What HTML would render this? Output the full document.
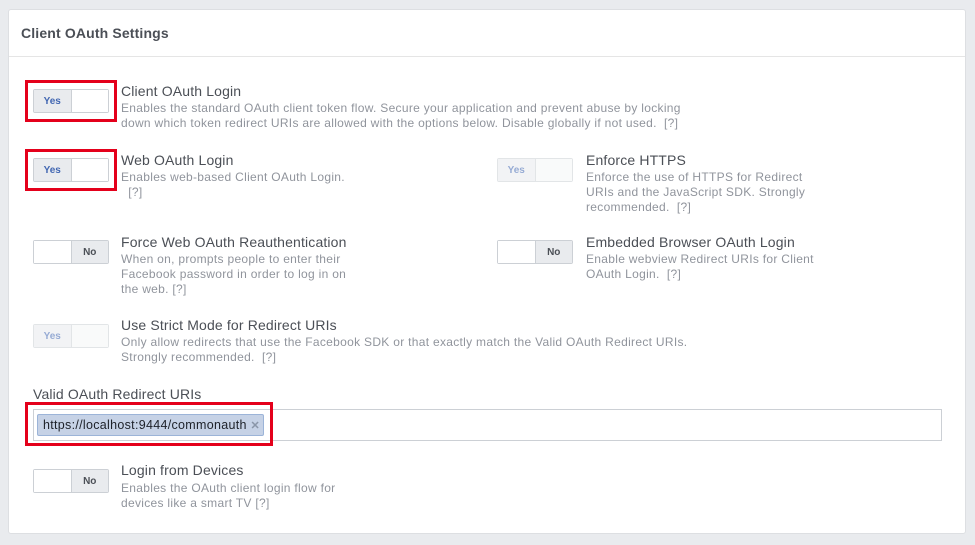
<!DOCTYPE html><html><head><style>
body{margin:0;width:975px;height:545px;background:#e9ebee;font-family:"Liberation Sans",sans-serif;position:relative;overflow:hidden}
.card{position:absolute;left:8px;top:9px;width:958px;height:525px;background:#fff;border:1px solid #dddfe2;border-radius:3px;box-sizing:border-box}
.hd{position:absolute;left:0;top:0;width:100%;height:47px;border-bottom:1px solid #e5e5e5;box-sizing:border-box;font-weight:bold;font-size:14px;color:#4b4f56;padding:15px 12px;letter-spacing:0.15px}
.a{position:absolute}
.tg{position:absolute;width:76px;height:24px;border:1px solid #ccd0d5;border-radius:2px;box-sizing:border-box;display:flex;font-size:10px;font-weight:bold}
.tg span{flex:1;display:flex;align-items:center;justify-content:center}
.on span:first-child{background:#e9ebee;color:#4267b2;border-right:1px solid #ccd0d5}
.on span:last-child{background:#fff}
.off span:first-child{background:#fff;border-right:1px solid #ccd0d5}
.off span:last-child{background:#e9ebee;color:#4b4f56}
.dis{opacity:.55}
.dis span:last-child{background:#f5f6f7}
.t{position:absolute;font-size:14px;color:#4b4f56;line-height:17px;letter-spacing:0.15px;white-space:nowrap}
.d{position:absolute;font-size:12px;color:#90949c;line-height:15px;letter-spacing:0.3px;white-space:nowrap}
.red{position:absolute;border:3px solid #e4001b;box-sizing:border-box}
</style></head><body>
<div class="card"><div class="hd">Client OAuth Settings</div></div>

<div class="tg on" style="left:33px;top:89px"><span>Yes</span><span></span></div>
<div class="red" style="left:25px;top:80px;width:92px;height:42px"></div>
<div class="t" style="left:121px;top:83px">Client OAuth Login</div>
<div class="d" style="left:121px;top:101px">Enables the standard OAuth client token flow. Secure your application and prevent abuse by locking<br>down which token redirect URIs are allowed with the options below. Disable globally if not used. &nbsp;[?]</div>

<div class="tg on" style="left:33px;top:158px"><span>Yes</span><span></span></div>
<div class="red" style="left:25px;top:149px;width:92px;height:42px"></div>
<div class="t" style="left:121px;top:152px">Web OAuth Login</div>
<div class="d" style="left:121px;top:170px">Enables web-based Client OAuth Login.<br>&nbsp; [?]</div>

<div class="tg on dis" style="left:497px;top:158px"><span>Yes</span><span></span></div>
<div class="t" style="left:586px;top:152px">Enforce HTTPS</div>
<div class="d" style="left:586px;top:170px">Enforce the use of HTTPS for Redirect<br>URIs and the JavaScript SDK. Strongly<br>recommended. &nbsp;[?]</div>

<div class="tg off" style="left:33px;top:240px"><span></span><span>No</span></div>
<div class="t" style="left:121px;top:234px">Force Web OAuth Reauthentication</div>
<div class="d" style="left:121px;top:252px">When on, prompts people to enter their<br>Facebook password in order to log in on<br>the web. [?]</div>

<div class="tg off" style="left:497px;top:240px"><span></span><span>No</span></div>
<div class="t" style="left:586px;top:234px">Embedded Browser OAuth Login</div>
<div class="d" style="left:586px;top:252px">Enable webview Redirect URIs for Client<br>OAuth Login. &nbsp;[?]</div>

<div class="tg on dis" style="left:33px;top:324px"><span>Yes</span><span></span></div>
<div class="t" style="left:121px;top:317px">Use Strict Mode for Redirect URIs</div>
<div class="d" style="left:121px;top:335px">Only allow redirects that use the Facebook SDK or that exactly match the Valid OAuth Redirect URIs.<br>Strongly recommended. &nbsp;[?]</div>

<div class="t" style="left:33px;top:386px">Valid OAuth Redirect URIs</div>
<div class="a" style="left:33px;top:409px;width:909px;height:32px;border:1px solid #ccd0d5;box-sizing:border-box"></div>
<div class="a" style="left:37px;top:414px;width:227px;height:22px;background:#c6d2e6;border:1px solid #9cb4d8;border-radius:2px;box-sizing:border-box;font-size:12.5px;color:#1d2129;line-height:20px;padding-left:5px;letter-spacing:0.3px;white-space:nowrap">https://localhost:9444/commonauth <span style="color:#8a96a8;font-weight:bold;font-size:11px">✕</span></div>
<div class="red" style="left:25px;top:402px;width:248px;height:44px"></div>

<div class="tg off" style="left:33px;top:469px"><span></span><span>No</span></div>
<div class="t" style="left:121px;top:462px">Login from Devices</div>
<div class="d" style="left:121px;top:481px">Enables the OAuth client login flow for<br>devices like a smart TV [?]</div>
</body></html>
